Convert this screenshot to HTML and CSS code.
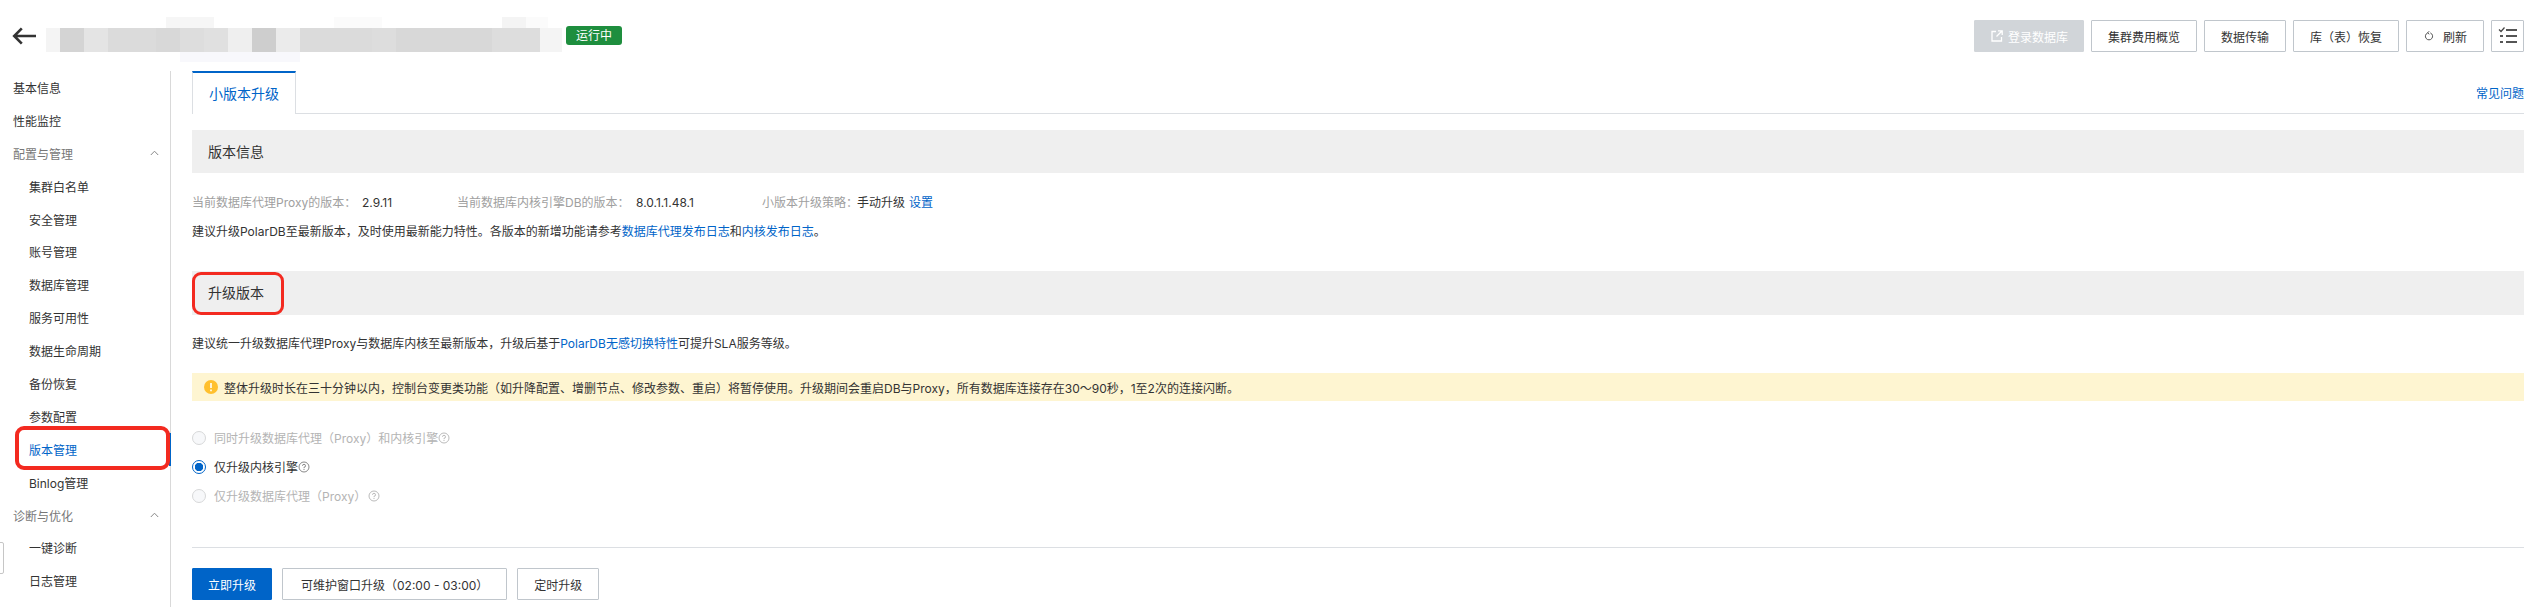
FILE: index.html
```html
<!DOCTYPE html>
<html lang="zh-CN">
<head>
<meta charset="utf-8">
<title>版本管理</title>
<link rel="stylesheet" href="styles.css">
</head>
<body>
<header class="header">
  <svg class="back" viewBox="0 0 24 18" width="24" height="18"><path d="M24 9H2.500M9.800 1.300 2.200 9l7.600 7.700" fill="none" stroke="#333" stroke-width="2.600"/></svg>
  <div class="masked">
    <div class="mask-row mask-top"><i class="w120"></i><i class="w48 s11"></i><i class="w120"></i><i class="w48 s12"></i><i class="w120"></i><i class="w24 s1"></i><i class="w22 s12"></i></div>
    <div class="mask-row mask-mid">
      <i class="w14 s1"></i><i class="w24 s2"></i><i class="w24 s3"></i><i class="w48 s4"></i><i class="w24 s5"></i><i class="w24 s6"></i><i class="w24 s7"></i><i class="w24 s8"></i><i class="w24 s9"></i><i class="w24 s10"></i><i class="w72 s4"></i><i class="w24 s6"></i><i class="w96 s5"></i><i class="w48 s6"></i><i class="w22 s1"></i>
    </div>
    <div class="mask-row mask-low"><i class="w120"></i><i class="w14"></i><i class="w120 s13"></i></div>
  </div>
  <span class="badge">运行中</span>
  <div class="actions">
    <button class="btn btn-disabled"><svg width="12" height="12" viewBox="0 0 12 12"><path d="M5 1.500H1v9.500h9.500V7M7 .8h4.200V5M11.200 .8 5.500 6.500" fill="none" stroke="#fff" stroke-width="1.300"/></svg>登录数据库</button>
    <button class="btn">集群费用概览</button>
    <button class="btn">数据传输</button>
    <button class="btn">库（表）恢复</button>
    <button class="btn btn-refresh"><svg width="12" height="12" viewBox="0 0 12 12"><path d="M7.300 2.900A3.600 3.600 0 1 1 4.700 2.900M6.200 1.200 4.600 2.900l1.700 1.300" fill="none" stroke="#555" stroke-width="1"/></svg>刷新</button>
    <button class="btn btn-icon"><svg width="20" height="20" viewBox="0 0 20 20"><path d="M1 3.500 3 5.500 6.500 1.500" fill="none" stroke="#444" stroke-width="1.200"/><path d="M8 4h11M8 10h11M8 16h11" stroke="#555" stroke-width="2"/><path d="M2 10h3M2 16h3" stroke="#555" stroke-width="2"/></svg></button>
  </div>
</header>
<div class="main">
  <nav class="side">
    <a class="nav-top">基本信息</a>
    <a class="nav-top">性能监控</a>
    <a class="nav-group">配置与管理<svg width="9" height="6" viewBox="0 0 9 6"><path d="M.8 5 4.500 1.200 8.200 5" fill="none" stroke="#888" stroke-width="1"/></svg></a>
    <a class="nav-sub">集群白名单</a>
    <a class="nav-sub">安全管理</a>
    <a class="nav-sub">账号管理</a>
    <a class="nav-sub">数据库管理</a>
    <a class="nav-sub">服务可用性</a>
    <a class="nav-sub">数据生命周期</a>
    <a class="nav-sub">备份恢复</a>
    <a class="nav-sub">参数配置</a>
    <a class="nav-sub nav-active">版本管理<span class="mark mark-nav"></span></a>
    <a class="nav-sub">Binlog管理</a>
    <a class="nav-group">诊断与优化<svg width="9" height="6" viewBox="0 0 9 6"><path d="M.8 5 4.500 1.200 8.200 5" fill="none" stroke="#888" stroke-width="1"/></svg></a>
    <a class="nav-sub">一键诊断</a>
    <a class="nav-sub">日志管理</a>
  </nav>
  <span class="handle"></span>
  <main class="content">
    <div class="tabs">
      <a class="tab">小版本升级</a>
      <a class="link">常见问题</a>
    </div>
    <h2 class="bar bar-info">版本信息</h2>
    <div class="info">
      <div class="info-item col-1"><span class="muted label-1">当前数据库代理Proxy的版本：</span><span class="val">2.9.11</span></div>
      <div class="info-item col-2"><span class="muted label-2">当前数据库内核引擎DB的版本：</span><span class="val">8.0.1.1.48.1</span></div>
      <div class="info-item"><span class="muted label-3">小版本升级策略：</span><span class="val">手动升级</span><a class="link link-set">设置</a></div>
    </div>
    <p class="line line-tip">建议升级PolarDB至最新版本，及时使用最新能力特性。各版本的新增功能请参考<a class="link">数据库代理发布日志</a>和<a class="link">内核发布日志</a>。</p>
    <h2 class="bar bar-upgrade">升级版本<span class="mark mark-bar"></span></h2>
    <p class="line line-upgrade">建议统一升级数据库代理Proxy与数据库内核至最新版本，升级后基于<a class="link">PolarDB无感切换特性</a>可提升SLA服务等级。</p>
    <div class="alert">
      <svg width="14" height="14" viewBox="0 0 14 14"><circle cx="7" cy="7" r="7" fill="#ffc02e"/><path d="M7 3v5M7 9.500v1.700" stroke="#fff" stroke-width="1.600"/></svg>
      <span>整体升级时长在三十分钟以内，控制台变更类功能（如升降配置、增删节点、修改参数、重启）将暂停使用。升级期间会重启DB与Proxy，所有数据库连接存在30～90秒，1至2次的连接闪断。</span>
    </div>
    <div class="options">
      <label class="opt opt-off"><span class="radio"></span>同时升级数据库代理（Proxy）和内核引擎<svg class="help" width="12" height="12" viewBox="0 0 12 12"><circle cx="6" cy="6" r="5" fill="none" stroke="currentColor"/><path d="M4.500 4.800A1.500 1.500 0 1 1 6 6.300V7.200M6 8v1" fill="none" stroke="currentColor"/></svg></label>
      <label class="opt"><span class="radio radio-on"></span>仅升级内核引擎<svg class="help" width="12" height="12" viewBox="0 0 12 12"><circle cx="6" cy="6" r="5" fill="none" stroke="currentColor"/><path d="M4.500 4.800A1.500 1.500 0 1 1 6 6.300V7.200M6 8v1" fill="none" stroke="currentColor"/></svg></label>
      <label class="opt opt-off"><span class="radio"></span>仅升级数据库代理（Proxy）<svg class="help help-far" width="12" height="12" viewBox="0 0 12 12"><circle cx="6" cy="6" r="5" fill="none" stroke="currentColor"/><path d="M4.500 4.800A1.500 1.500 0 1 1 6 6.300V7.200M6 8v1" fill="none" stroke="currentColor"/></svg></label>
    </div>
    <div class="footer">
      <button class="btn btn-primary">立即升级</button>
      <button class="btn btn-window">可维护窗口升级（02:00 - 03:00）</button>
      <button class="btn btn-timer">定时升级</button>
    </div>
  </main>
</div>
</body>
</html>
```

FILE: styles.css
```css
* { box-sizing: border-box; }
html, body { margin: 0; height: 100%; }
body {
  font-family: Inter, "Noto Sans CJK SC", sans-serif;
  font-size: 12px;
  color: #333;
  background: #fff;
  overflow: hidden;
}
.header {
  height: 71px;
  display: flex;
  align-items: flex-start;
  padding: 17px 15px 0 12px;
}
.back { margin-top: 10px; flex: none; }
.masked { margin-left: 10px; flex: none; }
.mask-row { display: flex; }
.mask-top { height: 11px; }
.mask-mid { height: 24px; }
.mask-low { height: 10px; }
.masked i { display: block; }
.w14 { width: 14px; } .w22 { width: 22px; } .w24 { width: 24px; }
.w48 { width: 48px; } .w72 { width: 72px; } .w96 { width: 96px; } .w120 { width: 120px; }
.s1 { background: #f4f4f4; } .s2 { background: #d4d4d4; } .s3 { background: #e4e4e4; }
.s4 { background: #dbdbdb; } .s5 { background: #d8d8d8; } .s6 { background: #dddddd; }
.s7 { background: #e0e0e0; } .s8 { background: #efefef; } .s9 { background: #cecece; }
.s10 { background: #ebebeb; } .s11 { background: #f6f6f6; } .s12 { background: #fbfbfb; }
.s13 { background: #f8f8fc; }
.badge {
  margin: 9px 0 0 4px;
  width: 56px;
  height: 19px;
  line-height: 19px;
  text-align: center;
  color: #fff;
  background: #1e8e3e;
  border-radius: 3px;
}
.actions { margin: 3px 0 0 auto; display: flex; gap: 7px; }
.btn {
  height: 32px;
  padding: 0 16px;
  display: inline-flex;
  align-items: center;
  font: inherit;
  color: #333;
  background: #fff;
  border: 1px solid #c0c6cc;
  border-radius: 1px;
  white-space: nowrap;
}
.btn-disabled { background: #d1d5d9; border-color: #d1d5d9; color: #fff; gap: 5px; padding-right: 15px; }
.btn-refresh { gap: 8px; }
.btn-icon { padding: 0 5px; width: 33px; justify-content: center; }
.main { display: flex; height: 536px; position: relative; }
.side {
  width: 171px;
  flex: none;
  border-right: 1px solid #d9d9d9;
}
.side a {
  height: 32.9px;
  display: flex;
  align-items: center;
  position: relative;
}
.nav-top { padding-left: 13px; }
.nav-group { padding-left: 13px; color: #777; justify-content: space-between; padding-right: 11px; }
.nav-sub { padding-left: 29px; }
.nav-active { color: #0064c8; border-right: 2px solid #0064c8; margin-right: -1px; }
.mark {
  position: absolute;
  border: 3px solid #f32a20;
  border-radius: 9px;
  pointer-events: none;
}
.mark-nav { left: 15px; right: -1px; top: -7px; bottom: -4px; border-width: 4px; }
.handle {
  position: absolute;
  left: -1px;
  top: 471px;
  width: 5px;
  height: 32px;
  background: #fff;
  border: 1px solid #c6c6c6;
  border-radius: 0 2px 2px 0;
}
.content { flex: 1; min-width: 0; padding: 0 15px 0 21px; }
.tabs {
  height: 43px;
  display: flex;
  justify-content: space-between;
  align-items: center;
  border-bottom: 1px solid #dcdfe3;
}
.tab {
  width: 104px;
  height: 43px;
  line-height: 41px;
  text-align: center;
  font-size: 14px;
  color: #0064c8;
  background: #fff;
  border: 1px solid #dcdfe3;
  border-top: 2px solid #0064c8;
  border-bottom: 0;
  position: relative;
  top: 0.5px;
}
.link { color: #0064c8; }
.bar {
  margin: 0;
  padding: 0 0 2px 16px;
  font-size: 14px;
  font-weight: 400;
  background: #efefef;
  display: flex;
  align-items: center;
  position: relative;
}
.bar-info { height: 43px; margin-top: 16px; }
.bar-upgrade { height: 44px; margin-top: 29px; }
.mark-bar { left: 0; width: 92px; top: 1px; bottom: 0; }
.info { display: flex; margin-top: 20px; line-height: 20px; }
.info-item { flex: none; display: flex; }
.col-1 { width: 265px; }
.col-2 { width: 305px; }
.muted { color: #a0a0a0; white-space: nowrap; }
.label-1 { width: 170px; }
.label-2 { width: 179px; }
.label-3 { width: 95px; }
.link-set { margin-left: 4px; }
.line { margin: 0; line-height: 20px; }
.line-tip { margin-top: 9px; }
.line-upgrade { margin-top: 19px; }
.alert {
  margin-top: 19px;
  height: 28px;
  padding-left: 12px;
  background: #fef5d1;
  display: flex;
  align-items: center;
  gap: 6px;
}
.options { margin-top: 22px; height: 125px; border-bottom: 1px solid #dcdfe3; }
.opt { height: 29px; display: flex; align-items: center; }
.opt-off { color: #b4b4b4; }
.radio {
  width: 14px;
  height: 14px;
  margin-right: 8px;
  border-radius: 50%;
  border: 1px solid #d7d8d9;
  background: #f7f8fa;
  flex: none;
}
.radio-on {
  border: 1.5px solid #0064c8;
  background: radial-gradient(circle, #0064c8 0 4px, #fff 4.5px);
}
.help { color: #888; flex: none; }
.opt-off .help { color: #bbb; }
.help-far { margin-left: 2px; }
.footer { margin-top: 20px; display: flex; gap: 10px; }
.btn-primary { background: #0064c8; border-color: #0064c8; color: #fff; padding: 0 15px; }
.btn-window { padding: 0 18px; }
```
